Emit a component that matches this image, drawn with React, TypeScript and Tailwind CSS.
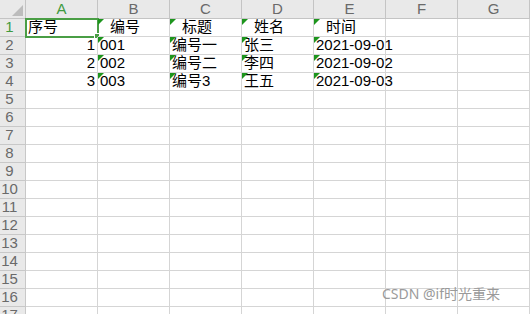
import React from 'react';

const cols = ['A', 'B', 'C', 'D', 'E', 'F', 'G'];

type Cell = { text?: string; right?: boolean; flag?: boolean; pad?: boolean };

const data: Cell[][] = [
  [
    { text: '序号' },
    { text: '编号', flag: true, pad: true },
    { text: '标题', flag: true, pad: true },
    { text: '姓名', flag: true, pad: true },
    { text: '时间', flag: true, pad: true },
  ],
  [
    { text: '1', right: true },
    { text: '001', flag: true },
    { text: '编号一', flag: true },
    { text: '张三', flag: true },
    { text: '2021-09-01', flag: true },
  ],
  [
    { text: '2', right: true },
    { text: '002', flag: true },
    { text: '编号二', flag: true },
    { text: '李四', flag: true },
    { text: '2021-09-02', flag: true },
  ],
  [
    { text: '3', right: true },
    { text: '003', flag: true },
    { text: '编号3', flag: true },
    { text: '王五', flag: true },
    { text: '2021-09-03', flag: true },
  ],
];

const rows = Array.from({ length: 17 }, (_, i) => i + 1);

const App: React.FC = () => {
  return (
    <div className="relative w-[530px] h-[314px] overflow-hidden bg-white font-['Liberation_Sans','Noto_Sans_CJK_SC',sans-serif]">
      {/* column header */}
      <div className="flex h-[19px]">
        <div className="w-[26px] shrink-0 flex items-end justify-end p-[2px] bg-[#e9e9e9] border-r border-b border-[#c4c4c4]">
          <svg width="11" height="11" viewBox="0 0 11 11">
            <polygon points="11,0 11,11 0,11" fill="#bcbcbc" />
          </svg>
        </div>
        {cols.map((c) => (
          <div
            key={c}
            className={`w-[72px] shrink-0 flex items-center justify-center bg-[#e9e9e9] border-r border-b border-[#c4c4c4] text-[15px] ${c === 'A' ? 'text-[#3f9a3f]' : 'text-[#6a6a6a]'}`}
          >
            {c}
          </div>
        ))}
      </div>

      {rows.map((r) => (
        <div key={r} className="flex h-[18px]">
          <div
            className={`w-[26px] shrink-0 flex items-center justify-center pr-[6px] bg-[#e9e9e9] border-r border-b border-[#c8c8c8] text-[15px] ${r === 1 ? 'text-[#3f9a3f]' : 'text-[#6a6a6a]'}`}
          >
            {r}
          </div>
          {cols.map((c, ci) => {
            const cell = data[r - 1]?.[ci];
            const active = r === 1 && ci === 0;
            return (
              <div
                key={c}
                className={`relative w-[72px] shrink-0 flex items-center border-r border-b border-[#d5d5d5] text-[15px] text-black whitespace-nowrap ${cell?.right ? 'justify-end pr-[2px]' : cell?.pad ? 'pl-[12px]' : 'pl-[2px]'}`}
              >
                {cell?.flag && (
                  <svg className="absolute left-0 top-0" width="6" height="6" viewBox="0 0 6 6">
                    <polygon points="0,0 6,0 0,6" fill="#1d951d" />
                  </svg>
                )}
                {cell?.text}
                {active && (
                  <>
                    <div className="absolute -left-[1px] -top-[1px] w-[74px] h-[20px] border-2 border-[#4a9e45]" />
                    <div className="absolute -right-[3px] -bottom-[3px] w-[6px] h-[6px] bg-[#4a9e45] border border-white" />
                  </>
                )}
              </div>
            );
          })}
        </div>
      ))}

      <div className="absolute right-[30px] bottom-[10px] text-[14px] text-[#9a9a9a] font-['Noto_Sans','Noto_Sans_CJK_SC',sans-serif]">
        CSDN @if时光重来
      </div>
    </div>
  );
};

export default App;
